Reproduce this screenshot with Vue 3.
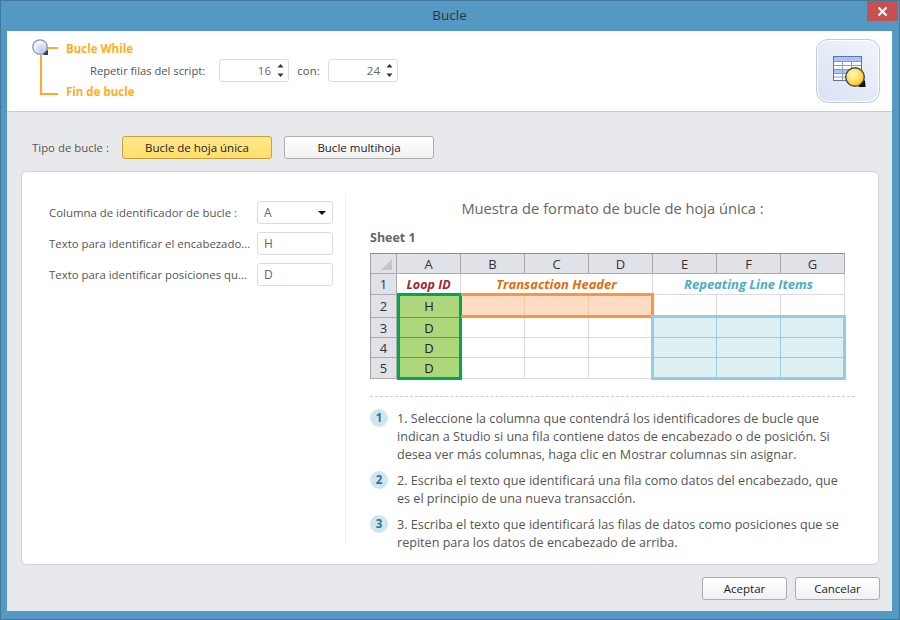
<script setup>
const columns = ['A', 'B', 'C', 'D', 'E', 'F', 'G']

const rows = [
  { num: 2, id: 'H', fill: { B: 'orange', C: 'orange', D: 'orange' } },
  { num: 3, id: 'D', fill: { E: 'blue', F: 'blue', G: 'blue' } },
  { num: 4, id: 'D', fill: { E: 'blue', F: 'blue', G: 'blue' } },
  { num: 5, id: 'D', fill: { E: 'blue', F: 'blue', G: 'blue' } },
]

const steps = [
  '1. Seleccione la columna que contendrá los identificadores de bucle que indican a Studio si una fila contiene datos de encabezado o de posición. Si desea ver más columnas, haga clic en Mostrar columnas sin asignar.',
  '2. Escriba el texto que identificará una fila como datos del encabezado, que es el principio de una nueva transacción.',
  '3. Escriba el texto que identificará las filas de datos como posiciones que se repiten para los datos de encabezado de arriba.',
]
</script>

<template>
  <div class="window">
    <div class="titlebar">
      <span>Bucle</span>
      <button class="close">
        <svg width="11" height="11" viewBox="0 0 11 11">
          <path d="M1.5 1.5 L9.5 9.5 M9.5 1.5 L1.5 9.5" stroke="#fff" stroke-width="2" />
        </svg>
      </button>
    </div>

    <div class="client">
      <div class="header">
        <svg class="loop-lines" width="30" height="60" viewBox="0 0 30 60">
          <defs>
            <radialGradient id="lens" cx="0.65" cy="0.75" r="0.75">
              <stop offset="0" stop-color="#b4c9ee" />
              <stop offset="1" stop-color="#ffffff" />
            </radialGradient>
          </defs>
          <path d="M14 9 H26 M9 16 V55 H26" fill="none" stroke="#ffad1f" stroke-width="2" />
          <circle cx="8" cy="8" r="7.2" fill="url(#lens)" stroke="#7f8daa" stroke-width="1.2" />
          <path d="M10.5 16 L16 10.5 L16 16 Z" fill="#2c3e55" />
        </svg>
        <div class="loop-text">
          <div class="loop-title">Bucle While</div>
          <div class="repeat-row">
            <span class="repeat-label">Repetir filas del script:</span>
            <div class="spin">
              <span>16</span>
              <svg width="9" height="17" viewBox="0 0 9 17">
                <path d="M4.5 2 L7.5 5.5 H1.5 Z M4.5 15 L7.5 11.5 H1.5 Z" fill="#333" />
              </svg>
            </div>
            <span class="con">con:</span>
            <div class="spin">
              <span>24</span>
              <svg width="9" height="17" viewBox="0 0 9 17">
                <path d="M4.5 2 L7.5 5.5 H1.5 Z M4.5 15 L7.5 11.5 H1.5 Z" fill="#333" />
              </svg>
            </div>
          </div>
          <div class="loop-title last">Fin de bucle</div>
        </div>
        <div class="big-icon">
          <svg width="34" height="34" viewBox="0 0 34 34">
            <rect x="0.5" y="0.5" width="28" height="24" fill="#fff" stroke="#5a74ab" />
            <rect x="1" y="1" width="27" height="4" fill="#a8c3f5" />
            <rect x="1" y="13" width="27" height="4" fill="#a8c3f5" />
            <path d="M1 5.5 H28 M1 9.5 H28 M1 13.5 H28 M1 17.5 H28 M1 21 H28 M9.5 5 V24 M18.5 5 V24" stroke="#8a9cc4" fill="none" />
            <defs>
              <radialGradient id="sun" cx="0.4" cy="0.35" r="0.75">
                <stop offset="0" stop-color="#fff8c4" />
                <stop offset="0.6" stop-color="#ffd84a" />
                <stop offset="1" stop-color="#f5a90e" />
              </radialGradient>
            </defs>
            <circle cx="22" cy="21" r="9.3" fill="url(#sun)" stroke="#4d4d4d" stroke-width="1.5" />
            <path d="M25 31 L32 24 L32.5 31 Z" fill="#111" />
          </svg>
        </div>
      </div>

      <div class="body">
        <div class="type-row">
          <span class="type-label">Tipo de bucle :</span>
          <button class="btn type-btn active">Bucle de hoja única</button>
          <button class="btn type-btn">Bucle multihoja</button>
        </div>

        <div class="card">
          <div class="form">
            <div class="field">
              <label>Columna de identificador de bucle :</label>
              <div class="input select">
                <span>A</span>
                <svg width="8" height="4" viewBox="0 0 8 4"><path d="M0 0 H8 L4 4 Z" fill="#111" /></svg>
              </div>
            </div>
            <div class="field">
              <label>Texto para identificar el encabezado...</label>
              <div class="input">H</div>
            </div>
            <div class="field">
              <label>Texto para identificar posiciones qu...</label>
              <div class="input">D</div>
            </div>
          </div>

          <div class="sample">
            <h2>Muestra de formato de bucle de hoja única :</h2>
            <div class="sheet-name">Sheet 1</div>

            <div class="sheet">
              <div class="corner"><i></i></div>
              <div v-for="c in columns" :key="c" class="col-head">{{ c }}</div>

              <div class="row-head">1</div>
              <div class="cell label loop-id">Loop ID</div>
              <div class="cell label trans">Transaction Header</div>
              <div class="cell label repeat">Repeating Line Items</div>

              <template v-for="r in rows" :key="r.num">
                <div class="row-head">{{ r.num }}</div>
                <div class="cell green">{{ r.id }}</div>
                <div
                  v-for="c in columns.slice(1)"
                  :key="c"
                  class="cell"
                  :class="r.fill[c]"
                ></div>
              </template>

              <div class="frame frame-green"></div>
              <div class="frame frame-orange"></div>
              <div class="frame frame-blue"></div>
            </div>

            <div class="steps">
              <div v-for="(s, i) in steps" :key="i" class="step">
                <span class="badge">{{ i + 1 }}</span>
                <p>{{ s }}</p>
              </div>
            </div>
          </div>
        </div>

        <div class="footer">
          <button class="btn foot-btn">Aceptar</button>
          <button class="btn foot-btn">Cancelar</button>
        </div>
      </div>
    </div>
  </div>
</template>

<style>
html, body {
  margin: 0;
  background: #5499c3;
}
</style>

<style scoped>
.window {
  width: 900px;
  height: 620px;
  box-sizing: border-box;
  background: #5499c3;
  border: 1px solid #41789c;
  padding: 0 7px 8px 6px;
  display: flex;
  flex-direction: column;
  font-family: "Open Sans", "Noto Sans", sans-serif;
  font-size: 11.4px;
  color: #555;
}

.titlebar {
  height: 30px;
  flex: none;
  box-sizing: border-box;
  padding-bottom: 2px;
  display: flex;
  align-items: center;
  justify-content: center;
  position: relative;
  font-size: 13.5px;
  color: #333;
}

.close {
  position: absolute;
  top: 0;
  right: -6px;
  width: 31px;
  height: 20px;
  border: 0;
  padding: 0;
  background: #c75050;
  display: flex;
  align-items: center;
  justify-content: center;
}

.client {
  flex: 1;
  display: flex;
  flex-direction: column;
  background: #e8e9ed;
}

.header {
  height: 81px;
  flex: none;
  box-sizing: border-box;
  background: #fff;
  border-bottom: 1px solid #ccc;
  display: flex;
  padding: 8px 12px 0 25px;
}

.loop-lines {
  flex: none;
}

.loop-text {
  margin-left: 4px;
  padding-top: 1px;
  flex: 1;
  display: flex;
  flex-direction: column;
}

.loop-title {
  font-weight: 700;
  font-size: 11.5px;
  line-height: 18px;
  color: #ffad1f;
}

.loop-title.last {
  margin-top: 1px;
}

.repeat-row {
  display: flex;
  align-items: center;
  height: 23px;
  margin-top: 1px;
}

.repeat-label {
  margin-left: 24px;
  width: 129px;
  font-size: 11.2px;
}

.spin {
  width: 70px;
  height: 23px;
  box-sizing: border-box;
  background: #fff;
  border: 1px solid #dcdcdc;
  border-radius: 3px;
  display: flex;
  align-items: center;
  justify-content: flex-end;
  gap: 5px;
  padding-right: 3px;
  color: #666;
  font-size: 11.5px;
}

.con {
  width: 39px;
  text-align: center;
}

.big-icon {
  width: 64px;
  height: 64px;
  box-sizing: border-box;
  border: 1px solid #c3c8d3;
  border-radius: 12px;
  background: linear-gradient(215deg, #f3f5fb 0%, #e9edf8 35%, #d9e2f5 100%);
  box-shadow: inset 0 0 0 1px #fff;
  display: flex;
  align-items: center;
  justify-content: center;
  padding: 3px 0 0 3px;
}

.body {
  flex: 1;
  padding: 0 13px 0 14px;
  display: flex;
  flex-direction: column;
}

.type-row {
  height: 59px;
  flex: none;
  box-sizing: border-box;
  padding: 24px 0 0 11px;
  display: flex;
  align-items: flex-start;
}

.type-label {
  width: 90px;
  line-height: 23px;
}

.btn {
  font: inherit;
  font-size: 11.5px;
  color: #222;
  border: 1px solid #adadad;
  border-radius: 3px;
  background: linear-gradient(#ffffff, #f1f1f3);
  padding: 0;
}

.type-btn {
  width: 150px;
  height: 23px;
  margin-right: 12px;
}

.type-btn.active {
  background: linear-gradient(#ffe88c, #ffdf6e);
  border-color: #c99f3f;
}

.card {
  height: 394px;
  flex: none;
  box-sizing: border-box;
  background: #fff;
  border: 1px solid #d4d4d4;
  border-radius: 6px;
  display: flex;
  padding: 21px 24px 20px 0;
}

.form {
  width: 324px;
  flex: none;
  box-sizing: border-box;
  padding: 8px 12px 0 27px;
  border-right: 1px solid #eee;
  display: flex;
  flex-direction: column;
  gap: 8px;
}

.field {
  display: flex;
  align-items: center;
  justify-content: space-between;
  height: 23px;
}

.input {
  width: 76px;
  height: 23px;
  box-sizing: border-box;
  border: 1px solid #dcdcdc;
  border-radius: 3px;
  padding: 0 6px;
  font-size: 12px;
  line-height: 21px;
  color: #666;
  background: #fff;
}

.select {
  display: flex;
  align-items: center;
  justify-content: space-between;
}

.sample {
  flex: 1;
  padding-left: 24px;
}

h2 {
  margin: 5px 0 0;
  font-size: 14.7px;
  font-weight: 400;
  line-height: 20px;
  color: #666;
  text-align: center;
}

.sheet-name {
  margin-top: 11px;
  font-weight: 700;
  font-size: 12.5px;
  line-height: 18px;
  color: #666;
}

.sheet {
  margin-top: 6px;
  position: relative;
  width: 475px;
  display: grid;
  grid-template-columns: 26px repeat(7, 64px);
  grid-template-rows: 20px 21px 23px 20px 20px 21px;
  border-top: 1px solid #8c8c8c;
  border-left: 1px solid #a0a0a0;
  box-sizing: border-box;
  color: #222;
  font-size: 13px;
}

.corner,
.col-head,
.row-head {
  background: #e0e2e7;
  border-right: 1px solid #ababab;
  border-bottom: 1px solid #ababab;
  display: flex;
  align-items: center;
  justify-content: center;
  color: #333;
}

.corner {
  justify-content: flex-end;
  align-items: flex-end;
  padding: 0 4px 3px 0;
}

.corner i {
  width: 0;
  height: 0;
  border-left: 11px solid transparent;
  border-bottom: 11px solid #c3c5c9;
}

.cell {
  border-right: 1px solid #dadada;
  border-bottom: 1px solid #dadada;
  display: flex;
  align-items: center;
  justify-content: center;
}

.label {
  font-weight: 700;
  font-style: italic;
  font-size: 13px;
}

.loop-id {
  color: #a3262e;
  font-size: 12.5px;
}

.trans {
  grid-column: span 3;
  color: #e36c0a;
}

.repeat {
  grid-column: span 3;
  color: #4bacc6;
}

.green {
  background: #aed77c;
  border-right: 0;
  border-bottom: 1px solid #35b060;
}

.orange {
  background: #fcdcc3;
  border-right-color: #f8c9a0;
  border-bottom-color: #fcdcc3;
}

.blue {
  background: #dff0f4;
  border-right-color: #92cddc;
  border-bottom-color: #92cddc;
}

.frame {
  position: absolute;
  box-sizing: border-box;
  pointer-events: none;
}

.frame-green {
  left: 26px;
  top: 39px;
  width: 65px;
  height: 87px;
  border: 3px solid #00a650;
}

.frame-orange {
  left: 90px;
  top: 39px;
  width: 193px;
  height: 25px;
  border: 3px solid #f79646;
  border-left: 0;
}

.frame-blue {
  left: 280px;
  top: 61px;
  width: 195px;
  height: 65px;
  border: 3px solid #92cddc;
}

.steps {
  margin-top: 17px;
  width: 485px;
  border-top: 1px dashed #ccc;
  padding-top: 12px;
  display: flex;
  flex-direction: column;
  gap: 7px;
}

.step {
  display: flex;
  gap: 9px;
}

.badge {
  width: 18px;
  height: 18px;
  flex: none;
  border-radius: 50%;
  background: #cde7f2;
  color: #3a6f8c;
  font-weight: 700;
  font-size: 11.5px;
  line-height: 18px;
  text-align: center;
}

.step p {
  margin: 0;
  padding-top: 1px;
  width: 450px;
  font-size: 12.6px;
  line-height: 18px;
  color: #555;
}

.footer {
  flex: 1;
  display: flex;
  justify-content: flex-end;
  align-items: flex-start;
  gap: 8px;
  padding-top: 12px;
  margin-right: -1px;
}

.foot-btn {
  width: 85px;
  height: 23px;
}
</style>
